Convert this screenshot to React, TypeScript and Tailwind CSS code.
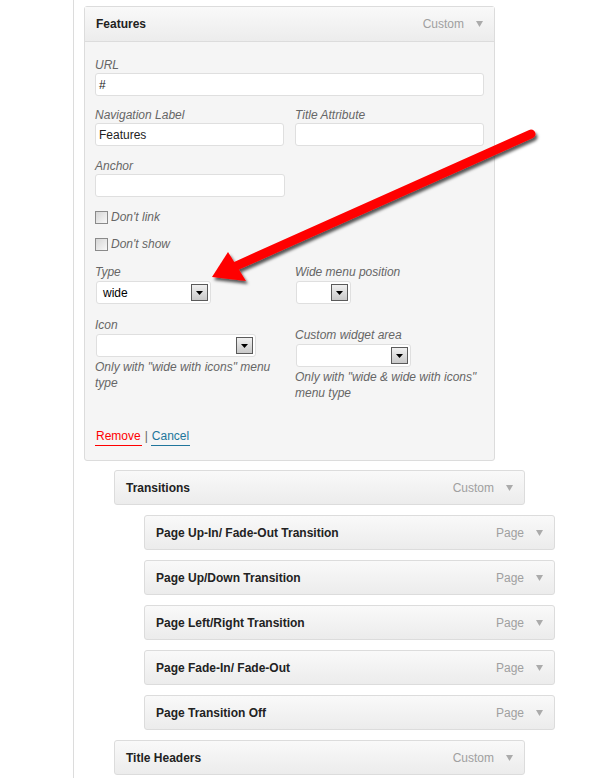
import React from 'react'

const font = "font-['Liberation_Sans',Arial,sans-serif]"

const Caret: React.FC = () => (
  <svg className="ml-[12px]" width="7" height="6" viewBox="0 0 7 6">
    <path d="M0 0h7L3.5 6z" fill="#ababab" />
  </svg>
)

const ItemBar: React.FC<{ title: string; kind: string; indent: string }> = ({ title, kind, indent }) => (
  <div
    className={`${indent} mt-[10px] flex h-[35px] w-[411px] items-center justify-between rounded-[3px] border border-[#dcdcdc] bg-gradient-to-b from-[#f9f9f9] to-[#ececec] pl-[11px] pr-[11px]`}
  >
    <span className="text-[12px] font-bold text-[#222]">{title}</span>
    <span className="flex items-center text-[12px] text-[#a0a0a0]">
      {kind}
      <Caret />
    </span>
  </div>
)

const Label: React.FC<{ text: string }> = ({ text }) => (
  <div className="h-[15px] text-[12px] italic leading-[15px] text-[#666]">{text}</div>
)

const TextInput: React.FC<{ value?: string; width: string }> = ({ value, width }) => (
  <div
    className={`${width} flex h-[23px] items-center rounded-[3px] border border-[#dfdfdf] bg-white px-[3px] text-[12px] text-[#222]`}
  >
    {value}
  </div>
)

const Select: React.FC<{ value?: string; width: string; className?: string }> = ({ value, width, className }) => (
  <div
    className={`${width} ${className ?? ''} flex h-[23px] items-center justify-between rounded-[3px] border border-[#dfdfdf] bg-white pl-[6px] pr-[2px] text-[12px] text-black`}
  >
    <span>{value}</span>
    <span className="flex h-[17px] w-[17px] items-center justify-center border border-[#5a5a5a] bg-gradient-to-b from-[#f0f0f0] to-[#c9c9c9]">
      <svg width="7" height="4" viewBox="0 0 7 4">
        <path d="M0 0h7L3.5 4z" fill="#000" />
      </svg>
    </span>
  </div>
)

const Check: React.FC<{ text: string; className: string }> = ({ text, className }) => (
  <div className={`${className} flex h-[16px] items-center`}>
    <span className="h-[13px] w-[13px] border border-[#8a8a8a] bg-gradient-to-br from-[#d6d6d6] to-[#f8f8f8]" />
    <span className="ml-[3px] text-[12px] italic text-[#666]">{text}</span>
  </div>
)

const Help: React.FC<{ text: string }> = ({ text }) => (
  <div className="mt-[2px] text-[12px] italic leading-[16px] text-[#666]">{text}</div>
)

const App: React.FC = () => {
  return (
    <div className={`${font} relative min-h-[778px] w-[609px] bg-white`}>
      <div className="ml-[73px] min-h-[778px] border-l border-[#dcdcdc] pt-[6px]">
        <div className="ml-[10px] w-[411px] rounded-[3px] border border-[#dcdcdc] bg-[#f5f5f5]">
          <div className="flex h-[35px] items-center justify-between border-b border-[#dcdcdc] bg-gradient-to-b from-[#f9f9f9] to-[#ececec] pl-[11px] pr-[11px]">
            <span className="text-[12px] font-bold text-[#222]">Features</span>
            <span className="flex items-center text-[12px] text-[#a0a0a0]">
              Custom
              <Caret />
            </span>
          </div>

          <div className="px-[10px] pb-[14px] pt-[16px]">
            <Label text="URL" />
            <TextInput value="#" width="w-full" />

            <div className="mt-[12px] grid grid-cols-2 gap-x-[11px]">
              <div>
                <Label text="Navigation Label" />
                <TextInput value="Features" width="w-full" />
              </div>
              <div>
                <Label text="Title Attribute" />
                <TextInput width="w-full" />
              </div>
            </div>

            <div className="mt-[13px]">
              <Label text="Anchor" />
              <TextInput width="w-[190px]" />
            </div>

            <Check text="Don't link" className="mt-[12px]" />
            <Check text="Don't show" className="mt-[11px]" />

            <div className="mt-[13px] grid grid-cols-2 gap-x-[11px]">
              <div>
                <Label text="Type" />
                <Select value="wide" width="w-[115px]" className="ml-[1px] mt-[1px]" />
              </div>
              <div>
                <Label text="Wide menu position" />
                <Select width="w-[55px]" className="ml-[1px] mt-[1px]" />
              </div>
            </div>

            <div className="mt-[14px] grid grid-cols-2 gap-x-[11px]">
              <div>
                <Label text="Icon" />
                <Select width="w-[160px]" className="ml-[1px] mt-[1px]" />
                <Help text={'Only with "wide with icons" menu type'} />
              </div>
              <div className="mt-[10px]">
                <Label text="Custom widget area" />
                <Select width="w-[115px]" className="ml-[1px] mt-[1px]" />
                <Help text={'Only with "wide & wide with icons" menu type'} />
              </div>
            </div>

            <div className="mt-[27px] flex items-start text-[12px] leading-[16px]">
              <a className="border-b border-[#ff0000] px-[1px] pb-[1px] text-[#ff0000]" href="#">
                Remove
              </a>
              <span className="mx-[3px] text-[#666]">|</span>
              <a className="border-b border-[#21759b] px-[1px] pb-[1px] text-[#21759b]" href="#">
                Cancel
              </a>
            </div>
          </div>
        </div>

        <div className="-mt-[1px]" />
        <ItemBar title="Transitions" kind="Custom" indent="ml-[40px]" />
        <ItemBar title="Page Up-In/ Fade-Out Transition" kind="Page" indent="ml-[70px]" />
        <ItemBar title="Page Up/Down Transition" kind="Page" indent="ml-[70px]" />
        <ItemBar title="Page Left/Right Transition" kind="Page" indent="ml-[70px]" />
        <ItemBar title="Page Fade-In/ Fade-Out" kind="Page" indent="ml-[70px]" />
        <ItemBar title="Page Transition Off" kind="Page" indent="ml-[70px]" />
        <ItemBar title="Title Headers" kind="Custom" indent="ml-[40px]" />
      </div>

      {/* red callout arrow drawn over the form */}
      <svg className="pointer-events-none absolute left-0 top-0" width="609" height="778" viewBox="0 0 609 778">
        <defs>
          <filter id="shadow" x="-10%" y="-10%" width="120%" height="130%">
            <feDropShadow dx="2" dy="3" stdDeviation="1.6" floodColor="#000" floodOpacity="0.65" />
          </filter>
        </defs>
        <g filter="url(#shadow)">
          <line x1="531" y1="134" x2="236" y2="266" stroke="#ff0000" strokeWidth="9" strokeLinecap="round" />
          <polygon points="212,277 228,252 246,281" fill="#ff0000" />
        </g>
      </svg>
    </div>
  )
}

export default App
